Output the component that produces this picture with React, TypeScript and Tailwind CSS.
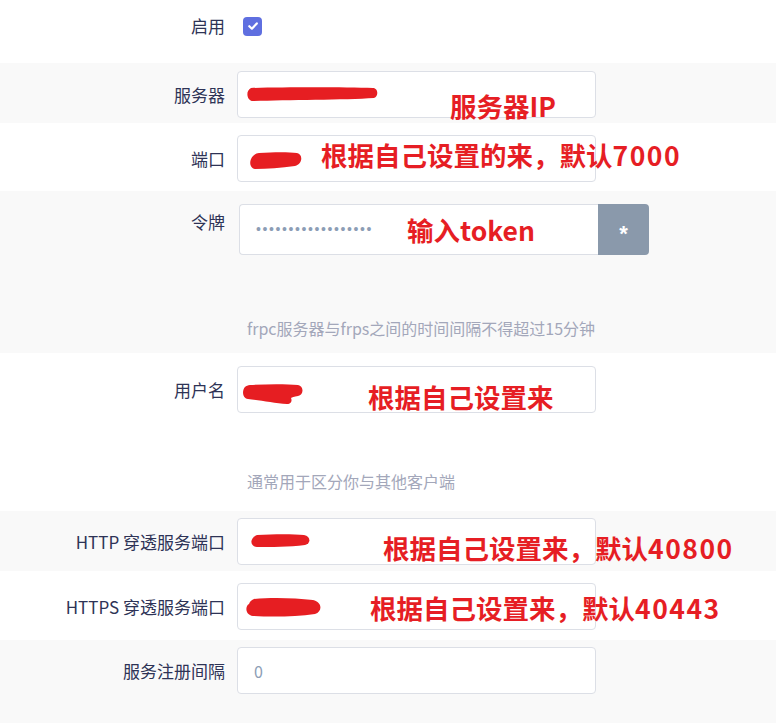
import type { ReactNode } from 'react'

const font = { fontFamily: '"Noto Sans CJK SC", "Noto Sans", sans-serif' }

interface RowProps {
  label: string
  className: string
  help?: string
  helpClass?: string
  children: ReactNode
}

function Row({ label, className, help, helpClass = '', children }: RowProps) {
  return (
    <div className={className}>
      <div className="flex items-center">
        <div className="w-[225px] shrink-0 text-right text-[17px] leading-6 text-[#2e3356]">{label}</div>
        <div className="ml-3">{children}</div>
      </div>
      {help && <div className={`pl-[247px] text-base leading-5 text-[#a3a7ba] ${helpClass}`}>{help}</div>}
    </div>
  )
}

function TextBox({ children }: { children?: ReactNode }) {
  return (
    <div className="flex h-[47px] w-[359px] items-center rounded border border-[#dcdfe6] bg-white px-4 text-base text-[#8c9db5]">
      {children}
    </div>
  )
}

// red marker strokes drawn over the original values
function Scribble({ x, y, w, h, d }: { x: number; y: number; w: number; h: number; d: string }) {
  return (
    <svg className="pointer-events-none absolute" style={{ left: x, top: y }} width={w} height={h} viewBox={`0 0 ${w} ${h}`}>
      <path d={d} fill="#e61e22" />
    </svg>
  )
}

const notes = [
  { text: '服务器IP', num: '', x: 450, y: 90 },
  { text: '根据自己设置的来，默认', num: '7000', x: 321, y: 139 },
  { text: '输入token', num: '', x: 407, y: 214 },
  { text: '根据自己设置来', num: '', x: 368, y: 381 },
  { text: '根据自己设置来，默认', num: '40800', x: 383, y: 532 },
  { text: '根据自己设置来，默认', num: '40443', x: 370, y: 592 },
]

export default function App() {
  return (
    <div className="relative h-[723px] w-[776px] overflow-hidden bg-white" style={font}>
      <Row label="启用" className="h-[63px] bg-white pt-[14px]">
        <div className="ml-[6px] flex h-[24px] items-center">
          <div className="flex h-[19px] w-[19px] items-center justify-center rounded-[4px] bg-[#5f6fe0]">
            <svg width="12" height="12" viewBox="0 0 12 12">
              <path d="M2.3 6.2 4.9 8.7 9.8 3.4" fill="none" stroke="white" strokeWidth="2.2" strokeLinecap="round" strokeLinejoin="round" />
            </svg>
          </div>
        </div>
      </Row>

      <Row label="服务器" className="h-[60px] bg-[#f9f9f9] pt-[8px]">
        <TextBox />
      </Row>

      <Row label="端口" className="h-[68px] bg-white pt-[12px]">
        <TextBox />
      </Row>

      <div className="h-[162px] bg-[#f9f9f9] pt-[13px]">
        <div className="flex items-start">
          <div className="mt-[6px] w-[225px] shrink-0 text-right text-[17px] leading-6 text-[#2e3356]">令牌</div>
          <div className="ml-[14px] flex h-[51px]">
            <div
              className="flex w-[359px] items-center rounded-l border border-r-0 border-[#dcdfe6] bg-white pl-4 text-[14px] tracking-[1.6px] text-[#8c9db5]"
              style={{ fontFamily: '"Liberation Sans", sans-serif' }}
            >
              ••••••••••••••••••
            </div>
            <button
              className="flex w-[51px] items-center justify-center rounded-r bg-[#8a99ab] pt-2 text-[22px] font-bold text-white"
              style={{ fontFamily: '"Liberation Sans", sans-serif' }}
            >
              *
            </button>
          </div>
        </div>
        <div className="mt-[63px] pl-[247px] text-base leading-5 text-[#a3a7ba]">frpc服务器与frps之间的时间间隔不得超过15分钟</div>
      </div>

      <Row label="用户名" className="h-[158px] bg-white pt-[13px]" help="通常用于区分你与其他客户端" helpClass="mt-[58px]">
        <TextBox />
      </Row>

      <Row label="HTTP 穿透服务端口" className="h-[60px] bg-[#f9f9f9] pt-[7px]">
        <TextBox />
      </Row>

      <Row label="HTTPS 穿透服务端口" className="h-[69px] bg-white pt-[12px]">
        <TextBox />
      </Row>

      <Row label="服务注册间隔" className="h-[83px] bg-[#f9f9f9] pt-[7px]">
        <TextBox>0</TextBox>
      </Row>

      <Scribble x={245} y={87} w={134} h={15} d="M6 1 C40 0 100 0 128 1 C133 1 134 9 129 11 C100 13 40 13 8 14 C2 14 0 4 6 1 Z" />
      <Scribble x={249} y={152} w={54} h={18} d="M10 1 C25 0 40 0 48 1 C54 2 54 12 46 14 C32 16 18 17 6 17 C0 16 0 8 4 4 C6 2 8 1 10 1 Z" />
      <Scribble x={242} y={384} w={62} h={21} d="M8 1 C25 0 45 0 56 1 C62 2 62 11 56 12 C52 13 50 13 49 14 C50 16 50 20 45 20 C32 19 16 16 6 15 C0 14 0 6 3 3 C4 2 6 1 8 1 Z" />
      <Scribble x={249} y={534} w={62} h={14} d="M8 1 C25 0 45 0 55 1 C62 2 62 10 56 11 C40 13 22 13 8 13 C1 13 0 4 8 1 Z" />
      <Scribble x={245} y={597} w={78} h={21} d="M9 2 C28 0 50 1 68 3 C77 5 78 14 70 17 C50 20 25 20 8 19 C0 18 0 9 4 7 C5 4 7 3 9 2 Z" />

      {notes.map((n) => (
        <div
          key={n.text + n.num}
          className="absolute whitespace-nowrap text-[26.5px] font-bold leading-8 text-[#e61e24]"
          style={{ left: n.x, top: n.y }}
        >
          {n.text}
          {n.num && <span className="tracking-[1.5px]">{n.num}</span>}
        </div>
      ))}
    </div>
  )
}
